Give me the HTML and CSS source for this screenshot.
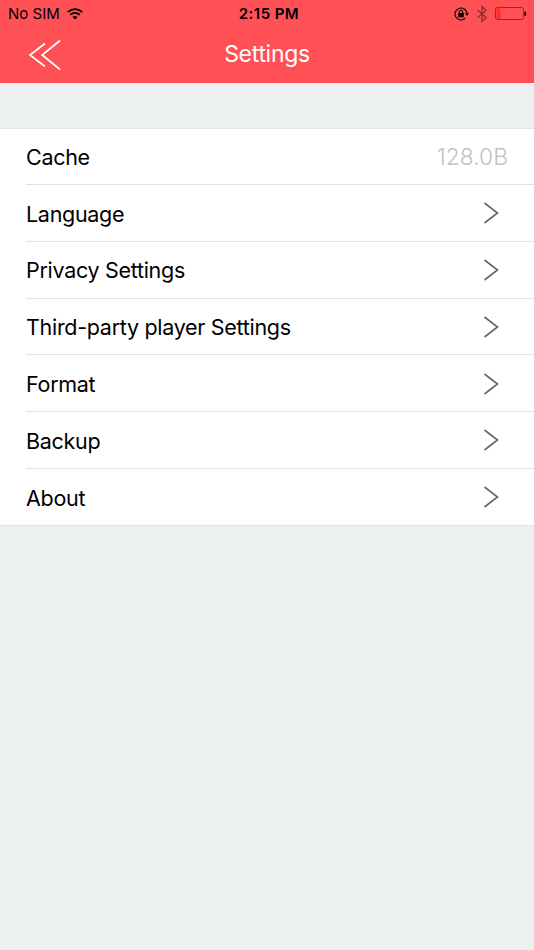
FILE: index.html
```html
<!DOCTYPE html>
<html lang="en">
<head>
<meta charset="utf-8">
<title>Settings</title>
<link rel="stylesheet" href="styles.css">
</head>
<body>
<header class="header">
  <div class="status">
    <div class="status-left"><span class="carrier">No SIM</span>
      <svg class="wifi" width="16" height="12" viewBox="0 0 16 12"><path d="M.8 4Q8 -1.8 15.2 4M3.2 6.7Q8 3.1 12.8 6.7" fill="none" stroke="#000" stroke-width="1.8"/><path d="M5.4 9Q8 7 10.6 9L8 11.6Z"/></svg>
    </div>
    <span class="clock">2:15 PM</span>
    <div class="status-right">
      <svg width="15" height="14" viewBox="0 0 15 14"><path d="M11.3 11.2A6 6 0 1 1 13 7" fill="none" stroke="#000" stroke-width="1.1"/><path d="M11 6.2h4l-2 2.7z"/><rect x="4.2" y="6" width="5.6" height="4.3"/><path d="M5.3 6V4.8a1.7 1.7 0 0 1 3.4 0V6" fill="none" stroke="#000"/></svg>
      <svg class="bluetooth" width="12" height="18" viewBox="0 0 12 18"><path d="M1.5 5l8.500 7.500L6 16.500V1.500L10 5.500l-8.500 7.500" fill="none" stroke="#8f3034" stroke-width="1.4"/></svg>
      <svg width="32" height="14" viewBox="0 0 32 14"><rect x=".5" y=".5" width="28" height="12" rx="2" fill="none" stroke="#98282d"/><rect x="1.500" y="1.500" width="4" height="10" fill="#ff3028"/><path d="M29.500 4.500h1q1.500 2.200 0 4.500h-1z" fill="#000"/></svg>
    </div>
  </div>
  <div class="nav"><svg class="back" width="34" height="32" viewBox="0 0 34 32"><path d="M17 4.500L2 16l15 11.500M32 1.500L14.200 16 32 30.500" fill="none" stroke="#fff" stroke-width="1.700"/></svg><h1 class="title">Settings</h1></div>
</header>
<main class="list">
  <div class="row"><span class="label">Cache</span><span class="value">128.0B</span></div>
  <div class="row"><span class="label">Language</span><svg class="chevron" viewBox="0 0 16 22"><path d="M1.500 1l13 10-13 10"/></svg></div>
  <div class="row"><span class="label">Privacy Settings</span><svg class="chevron" viewBox="0 0 16 22"><path d="M1.500 1l13 10-13 10"/></svg></div>
  <div class="row"><span class="label">Third-party player Settings</span><svg class="chevron" viewBox="0 0 16 22"><path d="M1.500 1l13 10-13 10"/></svg></div>
  <div class="row"><span class="label">Format</span><svg class="chevron" viewBox="0 0 16 22"><path d="M1.500 1l13 10-13 10"/></svg></div>
  <div class="row"><span class="label">Backup</span><svg class="chevron" viewBox="0 0 16 22"><path d="M1.500 1l13 10-13 10"/></svg></div>
  <div class="row"><span class="label">About</span><svg class="chevron" viewBox="0 0 16 22"><path d="M1.500 1l13 10-13 10"/></svg></div>
</main>
</body>
</html>
```
FILE: styles.css
```css
* { box-sizing: border-box; }
body { margin: 0; min-height: 950px; background: #ecf0f1; font-family: Inter, sans-serif; color: #000; }
svg { display: block; flex: none; }
.header { height: 83px; background: #ff5155; }
.status { height: 27px; display: grid; grid-template-columns: 1fr auto 1fr; align-items: center; padding: 0 7px 0 8px; font-size: 15px; }
.status-left, .status-right { display: flex; align-items: center; gap: 7px; }
.status-right { justify-content: flex-end; }
.clock { font-weight: 600; letter-spacing: .45px; padding-left: 3px; }
.nav { height: 55px; display: grid; grid-template-columns: 1fr auto 1fr; align-items: center; padding: 0 28px; }
.title { margin: 0; padding-bottom: 1px; font-size: 23px; letter-spacing: -.3px; font-weight: 400; color: #fff; }
.list { margin-top: 44.6px; background: #fff; border-top: 1px solid #e3e6e7; border-bottom: 1px solid #dce0e1; padding-left: 26px; }
.row { height: 56.75px; display: flex; align-items: center; justify-content: space-between; padding-right: 26px; border-bottom: 1px solid #e2e2e4; font-size: 21.5px; }
.row:first-child { height: 56.6px; }
.row:last-child { border-bottom: 0; height: 56.2px; }
.label { letter-spacing: -.3px; padding-top: 1.2px; }
.value { color: #bfc3c8; font-size: 22.8px; font-weight: 300; }
.chevron { width: 16px; height: 22px; margin: .6px 9px 0 0; fill: none; stroke: #666; stroke-width: 1.6; }
```
